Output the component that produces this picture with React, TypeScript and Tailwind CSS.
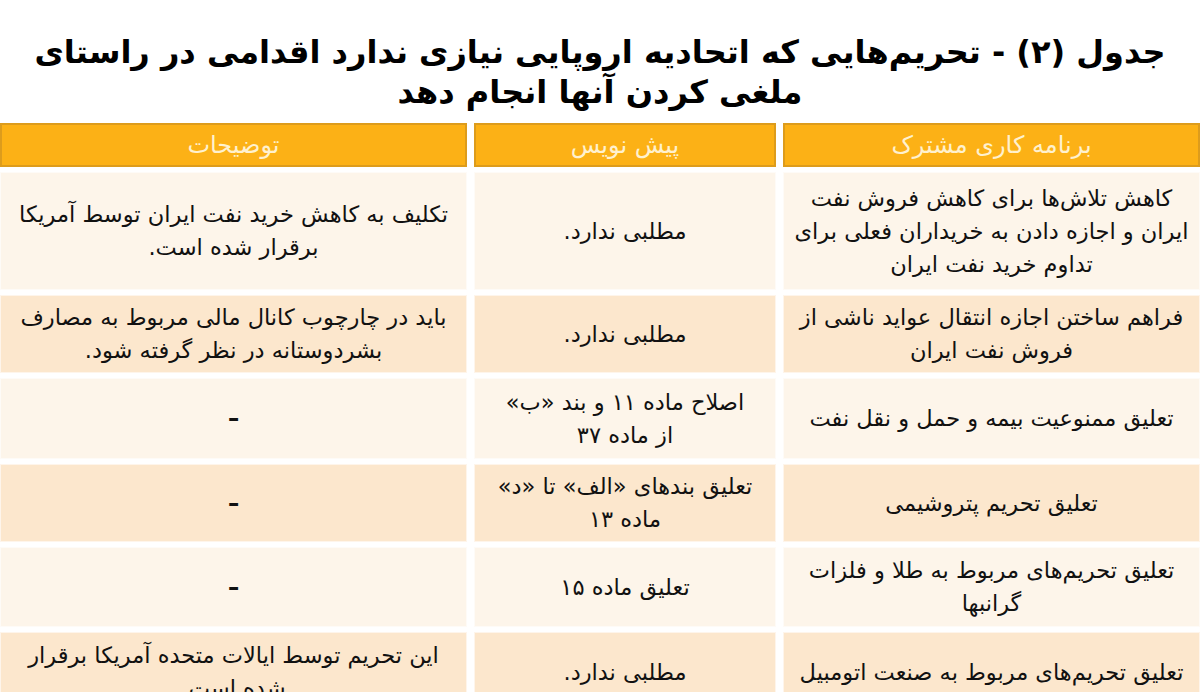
import React from "react";

type Row = {
  plan: string[];
  draft: string[];
  notes: string[];
  h: string;
  tone: "light" | "tan";
};

const rows: Row[] = [
  {
    plan: ["کاهش تلاش‌ها برای کاهش فروش نفت", "ایران و اجازه دادن به خریداران فعلی برای", "تداوم خرید نفت ایران"],
    draft: ["مطلبی ندارد."],
    notes: ["تکلیف به کاهش خرید نفت ایران توسط آمریکا", "برقرار شده است."],
    h: "h-[118px]",
    tone: "light",
  },
  {
    plan: ["فراهم ساختن اجازه انتقال عواید ناشی از", "فروش نفت ایران"],
    draft: ["مطلبی ندارد."],
    notes: ["باید در چارچوب کانال مالی مربوط به مصارف", "بشردوستانه در نظر گرفته شود."],
    h: "h-[78px]",
    tone: "tan",
  },
  {
    plan: ["تعلیق ممنوعیت بیمه و حمل و نقل نفت"],
    draft: ["اصلاح ماده ۱۱ و بند «ب»", "از ماده ۳۷"],
    notes: ["–"],
    h: "h-[81px]",
    tone: "light",
  },
  {
    plan: ["تعلیق تحریم پتروشیمی"],
    draft: ["تعلیق بندهای «الف» تا «د»", "ماده ۱۳"],
    notes: ["–"],
    h: "h-[78px]",
    tone: "tan",
  },
  {
    plan: ["تعلیق تحریم‌های مربوط به طلا و فلزات", "گرانبها"],
    draft: ["تعلیق ماده ۱۵"],
    notes: ["–"],
    h: "h-[80px]",
    tone: "light",
  },
  {
    plan: ["تعلیق تحریم‌های مربوط به صنعت اتومبیل"],
    draft: ["مطلبی ندارد."],
    notes: ["این تحریم توسط ایالات متحده آمریکا برقرار", "شده است."],
    h: "h-[80px]",
    tone: "tan",
  },
];

function Cell({ lines, tone }: { lines: string[]; tone: "light" | "tan" }) {
  return (
    <div
      className={
        "flex flex-col items-center justify-center text-center leading-[33px] text-[22.5px] text-[#111] border border-white/60 " +
        (tone === "light" ? "bg-[#fdf5ea]" : "bg-[#fce7cd]")
      }
    >
      {lines.map((l, i) => (
        <span key={i} className={"whitespace-nowrap " + (l === "–" ? "font-bold" : "")}>
          {l}
        </span>
      ))}
    </div>
  );
}

export default function App() {
  return (
    <div
      dir="rtl"
      className="w-[1200px] h-[692px] overflow-hidden bg-white"
      style={{ fontFamily: '"DejaVu Sans", sans-serif' }}
    >
      {/* title */}
      <div className="pt-[32px] h-[123px] text-center font-bold text-[32px] leading-[40px] text-black">
        <div>جدول (۲) - تحریم‌هایی که اتحادیه اروپایی نیازی ندارد اقدامی در راستای</div>
        <div>ملغی کردن آنها انجام دهد</div>
      </div>

      <div className="flex flex-col gap-[5px]">
        {/* header */}
        <div className="grid grid-cols-[417px_302px_467px] gap-x-[7px] h-[44px]">
          {["برنامه کاری مشترک", "پیش نویس", "توضیحات"].map((t) => (
            <div
              key={t}
              className="flex items-center justify-center bg-[#fcb116] border-2 border-[#dd9c1c] text-[#fff1cf] text-[24px]"
            >
              {t}
            </div>
          ))}
        </div>

        {rows.map((r, i) => (
          <div key={i} className={"grid grid-cols-[417px_302px_467px] gap-x-[7px] " + r.h}>
            <Cell lines={r.plan} tone={r.tone} />
            <Cell lines={r.draft} tone={r.tone} />
            <Cell lines={r.notes} tone={r.tone} />
          </div>
        ))}
      </div>
    </div>
  );
}
